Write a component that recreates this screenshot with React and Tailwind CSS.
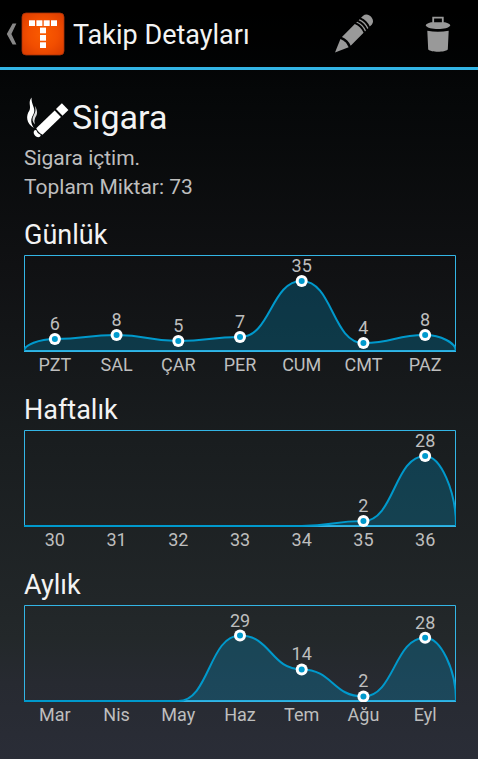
import React from "react";

const CHART_WIDTH = 432;
const BASELINE = 96;

const charts = [
  {
    title: "Günlük",
    max: 35,
    labels: ["PZT", "SAL", "ÇAR", "PER", "CUM", "CMT", "PAZ"],
    values: [6, 8, 5, 7, 35, 4, 8],
  },
  {
    title: "Haftalık",
    max: 28,
    labels: ["30", "31", "32", "33", "34", "35", "36"],
    values: [0, 0, 0, 0, 0, 2, 28],
  },
  {
    title: "Aylık",
    max: 31,
    labels: ["Mar", "Nis", "May", "Haz", "Tem", "Ağu", "Eyl"],
    values: [0, 0, 0, 29, 14, 2, 28],
  },
];

function Logo() {
  return (
    <svg className="size-[44px] shrink-0" viewBox="0 0 44 44" aria-hidden="true">
      <defs>
        <radialGradient id="logo-fill" cx="50%" cy="50%" r="70%">
          <stop offset="0" stopColor="#fa5c00" />
          <stop offset="0.5" stopColor="#f24e00" />
          <stop offset="1" stopColor="#d83a00" />
        </radialGradient>
      </defs>
      <rect x="1" y="1" width="42" height="42" rx="4" fill="url(#logo-fill)" stroke="#a83208" strokeWidth="0.8" />
      <g fill="#fff">
        <rect x="8" y="8.3" width="6" height="5.7" />
        <rect x="15.4" y="8.3" width="6" height="5.7" />
        <rect x="22.7" y="8.3" width="6" height="5.7" />
        <rect x="30" y="8.3" width="6" height="5.7" />
        <rect x="19" y="15.6" width="6" height="5.7" />
        <rect x="19" y="23" width="6" height="5.7" />
        <rect x="19" y="30.3" width="6" height="5.7" />
      </g>
    </svg>
  );
}

function PencilIcon() {
  return (
    <svg className="size-12" viewBox="0 0 48 48" aria-hidden="true">
      <g fill="#999" transform="translate(5 42.6) rotate(-45)">
        <path d="M0 0 L13.5 -5.8 Q16 0 13.5 5.8 Z" />
        <path d="M16 -6.2 H34.2 Q36.6 0 34.2 6.2 H16 Q18.6 0 16 -6.2 Z" />
        <path d="M36.2 -6.2 H37.6 Q40 0 37.6 6.2 H36.2 Q38.6 0 36.2 -6.2 Z" />
        <path d="M39.6 -6.2 H41 Q43.4 0 41 6.2 H39.6 Q42 0 39.6 -6.2 Z" />
        <path d="M43 -6.2 H46 C52.4 -5.6 52.4 5.6 46 6.2 H43 Q45.4 0 43 -6.2 Z" />
      </g>
    </svg>
  );
}

function TrashIcon() {
  return (
    <svg className="size-12" viewBox="0 0 48 48" aria-hidden="true">
      <path d="M19.2 13.5 V7.7 H28.8 V13.5" fill="none" stroke="#999" strokeWidth="1.8" />
      <path
        d="M17 12.3 H31 Q36 13.6 36.3 15.5 C34 20.2 14 20.2 11.7 15.5 Q12 13.6 17 12.3 Z"
        fill="#999"
      />
      <path d="M13.3 20.8 Q24 22.6 34.7 20.8 L33.8 39.4 C31 42.4 17 42.4 14.2 39.4 Z" fill="#999" />
    </svg>
  );
}

function CigaretteIcon() {
  return (
    <svg className="size-12 shrink-0" viewBox="0 0 48 48" aria-hidden="true">
      <g transform="translate(12.8 41) rotate(-44)" fill="#fff">
        <path d="M0.6 -4.2 C-3.4 -3.4 -3.4 3.4 0.6 4.2 Q2.2 3.8 2.2 3 Q0.6 0 2.2 -3 Q2 -4 0.6 -4.2 Z" />
        <path d="M3.6 -4.5 H29.2 V4.5 H3.6 Q1.8 0 3.6 -4.5 Z" />
        <path d="M31.2 -4.7 H39.4 V4.7 H31.2 Z" />
      </g>
      <path
        d="M7.6 4.4 C3.6 9.5 7.5 13 5.4 17.4 C1.8 22.5 2 30 9.8 35 C6.4 29.5 6.8 26 8.8 22.5 C11.8 17.5 9.6 14.5 8.6 11.2 C7.8 8.8 7.4 7 7.6 4.4 Z"
        fill="#fff"
      />
      <path
        d="M10.9 13 C14.6 19 12.9 22 11.1 25 Q9.7 28 10.9 31.4 C8.2 28.6 7.8 25.6 9.6 22.4 C11.6 19 12 17 10.9 13 Z"
        fill="#fff"
        opacity="0.85"
      />
    </svg>
  );
}

function curvePath(points) {
  const first = points[0];
  const last = points[points.length - 1];
  let d = `M0 ${BASELINE} C0 ${(BASELINE + first.y) / 2} ${first.x / 2} ${first.y} ${first.x} ${first.y}`;
  for (let i = 1; i < points.length; i++) {
    const a = points[i - 1];
    const b = points[i];
    const mid = (a.x + b.x) / 2;
    d += ` C${mid} ${a.y} ${mid} ${b.y} ${b.x} ${b.y}`;
  }
  const tail = (last.x + CHART_WIDTH) / 2;
  d += ` C${tail} ${last.y} ${CHART_WIDTH} ${(BASELINE + last.y) / 2} ${CHART_WIDTH} ${BASELINE}`;
  return d;
}

function Chart({ title, labels, values, max }) {
  const points = values.map((value, i) => ({
    value,
    x: ((i + 0.5) * CHART_WIDTH) / values.length,
    y: BASELINE - (value * 70) / max,
    left: `${((i + 0.5) * 100) / values.length}%`,
  }));
  const line = curvePath(points);

  return (
    <section>
      <h2 className="mb-1 text-[27px] leading-8 text-[#f3f3f3]">{title}</h2>
      <svg className="block h-[97px] w-full" role="img" aria-label={title}>
        <svg width="100%" height="97" viewBox="0 0 432 97" preserveAspectRatio="none">
          <path d="M0.5 96 V0.5 H431.5 V96" fill="none" stroke="#33b5e5" vectorEffect="non-scaling-stroke" />
          <path d={`M0 ${BASELINE} H432`} stroke="#33b5e5" strokeWidth="2" vectorEffect="non-scaling-stroke" />
          <path d={line} fill="#0099cc" fillOpacity="0.27" />
          <path d={line} fill="none" stroke="#0099cc" strokeWidth="2" vectorEffect="non-scaling-stroke" />
        </svg>
        {points
          .filter((p) => p.value > 0)
          .map((p) => (
            <g key={p.left}>
              <circle cx={p.left} cy={p.y} r="6" fill="#fff" />
              <circle cx={p.left} cy={p.y} r="3" fill="#0099cc" />
              <text x={p.left} y={p.y - 9} textAnchor="middle" className="fill-[#bebebe] text-[18px]">
                {p.value}
              </text>
            </g>
          ))}
      </svg>
      <div className="grid grid-cols-7 text-center text-[18px] leading-[26px] text-[#bebebe]">
        {labels.map((label) => (
          <span key={label}>{label}</span>
        ))}
      </div>
    </section>
  );
}

export default function App() {
  return (
    <div className="min-h-screen bg-[linear-gradient(to_bottom,#000000_0%,#050708_12%,#101113_35%,#191d1f_58%,#23282a_84%,#272a31_90%,#2a2d37_100%)] font-['Roboto',sans-serif] text-[#bebebe]">
      <header className="flex h-[70px] items-center border-b-[3px] border-[#33b5e5] bg-black/40 pr-4 pl-[6px]">
        <button type="button" aria-label="Geri" className="flex items-center">
          <svg className="h-[44px] w-[15px]" viewBox="0 0 15 44" aria-hidden="true">
            <path d="M6.6 11.5 H10.4 L5.4 22 L10.4 32.5 H6.6 L0.8 22 Z" fill="#888" />
          </svg>
          <Logo />
        </button>
        <h1 className="ml-2 flex-1 pt-[2px] text-[27px] leading-8 whitespace-nowrap text-[#f3f3f3]">
          Takip Detayları
        </h1>
        <div className="flex gap-9">
          <button type="button" aria-label="Düzenle">
            <PencilIcon />
          </button>
          <button type="button" aria-label="Sil">
            <TrashIcon />
          </button>
        </div>
      </header>

      <main className="pt-6 pr-[22px] pb-4 pl-6">
        <div className="mb-1 flex h-[46px] items-center">
          <CigaretteIcon />
          <h2 className="text-[34px] leading-10 text-[#f3f3f3]">Sigara</h2>
        </div>
        <p className="text-[21px] leading-[29px]">Sigara içtim.</p>
        <p className="text-[21px] leading-[29px]">Toplam Miktar: 73</p>
        <div className="mt-[17px] flex flex-col gap-4">
          {charts.map((chart) => (
            <Chart key={chart.title} {...chart} />
          ))}
        </div>
      </main>
    </div>
  );
}
